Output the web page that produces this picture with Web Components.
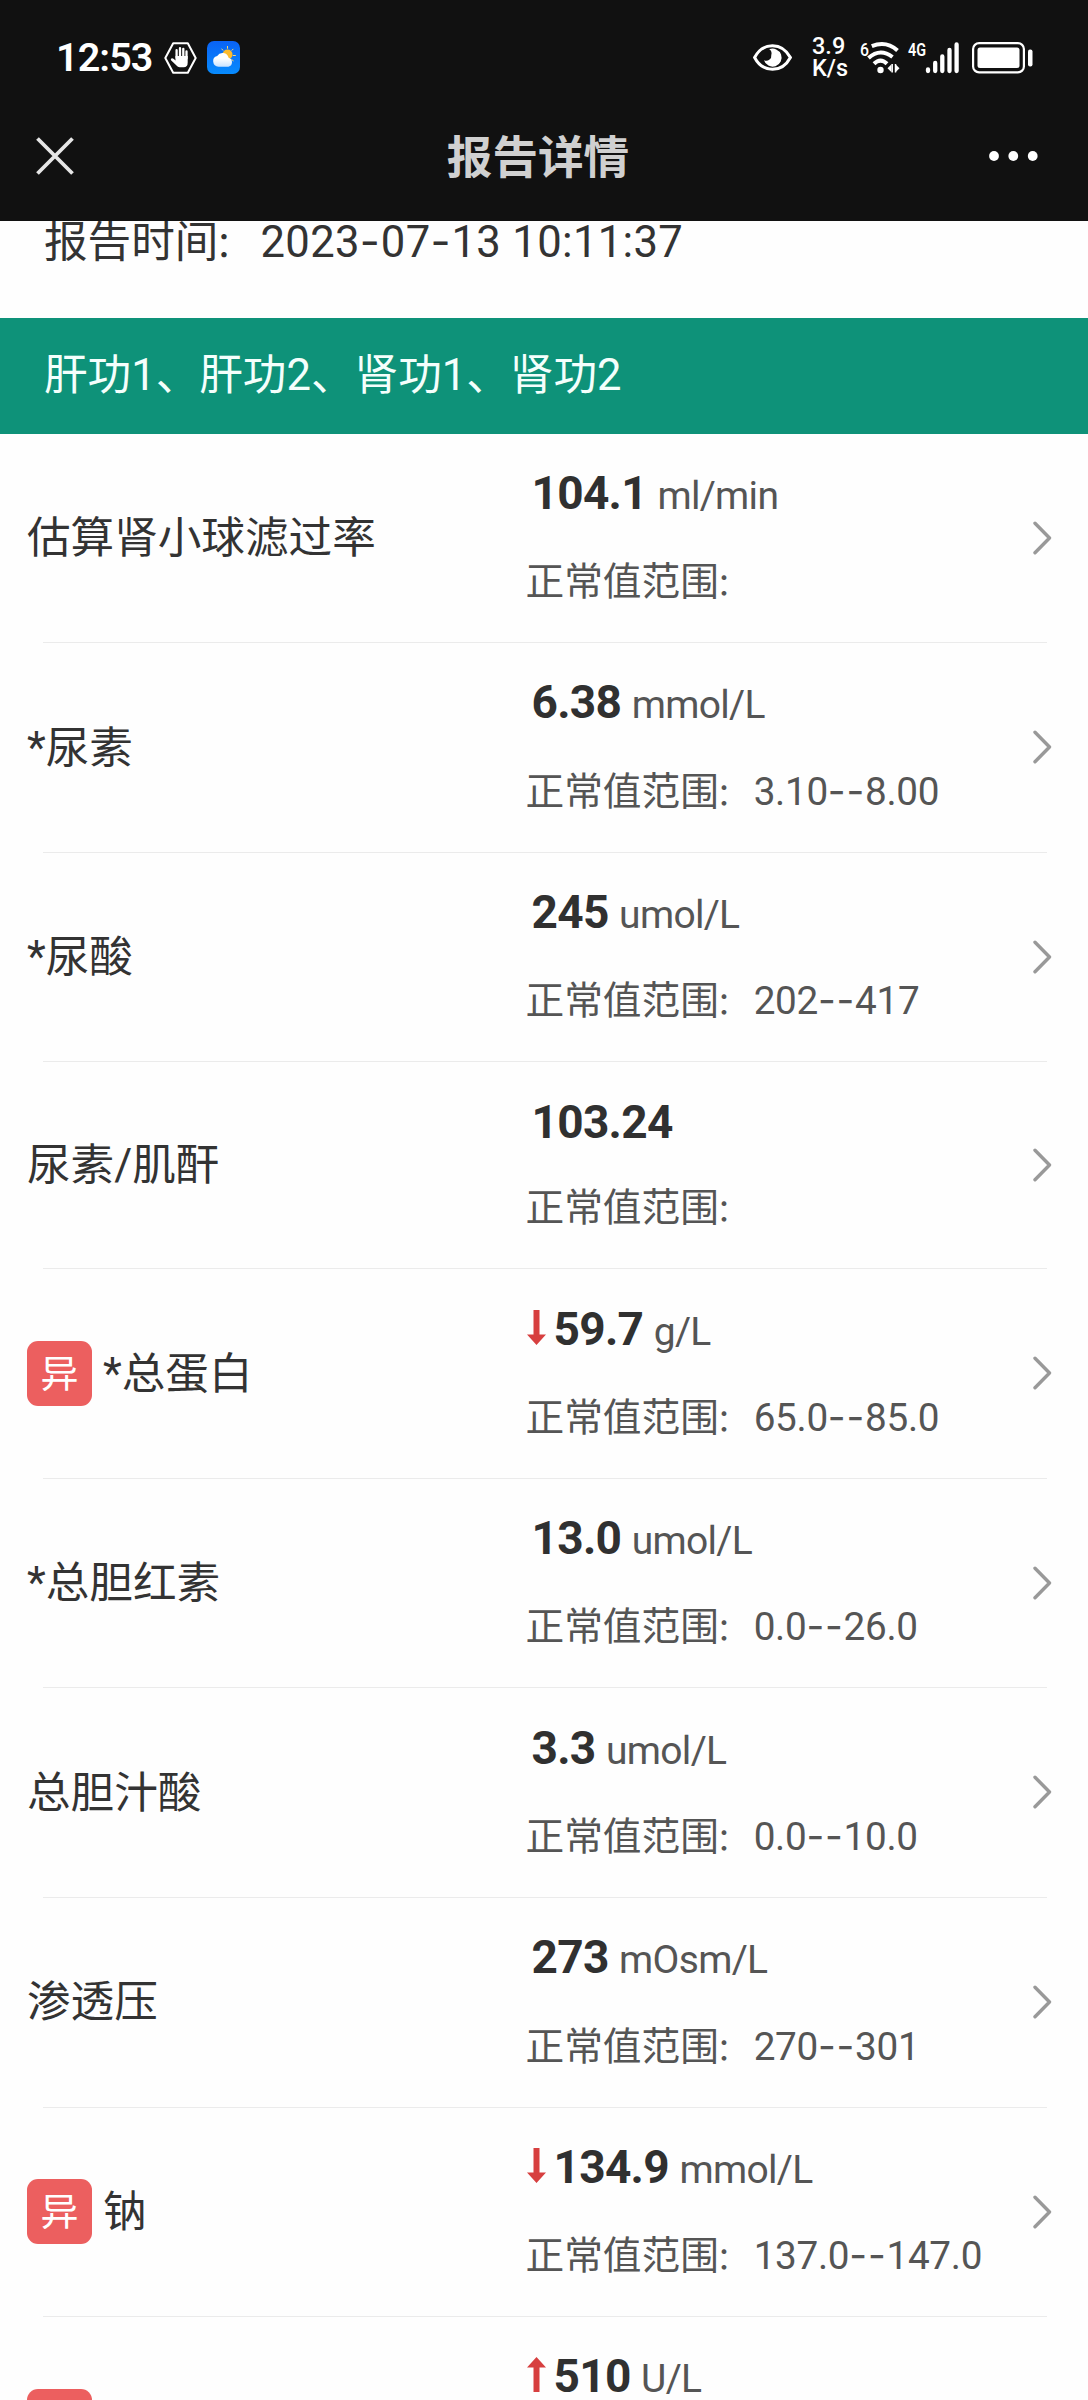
<!DOCTYPE html>
<html lang="zh-CN">
<head>
<meta charset="utf-8">
<title>报告详情</title>
<style>
html, body {
    margin: 0;
    height: 2400px;
    overflow: hidden;
}

body {
    background: #fefefe;
    color: #333;
    font-family: Roboto, "Noto Sans CJK SC", sans-serif;
}
</style>
</head>
<body>
<report-page></report-page>

<script>
// wraps hyphens so that they can be drawn wider than Roboto's own
const dashes = text => text.replace(/-+/g, m => `<span class="dash">${m}</span>`);

const textStyle = `
.dash {
    font-family: Inter, sans-serif;
    line-height: 0;
    letter-spacing: 0.02em;
}

.colon {
    font-size: 0.8em;
    line-height: 0;
    margin: 0 0.21em 0 -0.09em;
}`;

class StatusBar extends HTMLElement{
    constructor(){
        super();
        this.shadowDOM=this.attachShadow({mode:"open"});
    }

    connectedCallback(){
        this.shadowDOM.innerHTML=`
        <style>
        :host {
            display: flex;
            align-items: center;
            box-sizing: border-box;
            height: 115px;
            padding: 0 55px 0 56px;
            color: #fff;
        }

        svg {
            display: block;
            flex: none;
            overflow: visible;
        }

        .time {
            font-size: 39.5px;
            font-weight: 600;
            line-height: 60px;
            width: 108px;
            letter-spacing: -0.9px;
            margin-top: 1px;
        }

        .weather {
            margin-left: 10px;
        }

        .right {
            display: flex;
            align-items: center;
            margin-left: auto;
        }

        .speed {
            display: grid;
            font-size: 23.5px;
            line-height: 21.5px;
            font-weight: 500;
            width: 35px;
            margin: 0 13px 0 20px;
        }
        </style>
        <span class="time">12:53</span>
        <svg width="33" height="32" viewBox="0 0 33 32">
            <path d="M9.2 1.2h14.6l7.9 14.8-7.9 14.8H9.2L1.3 16z" fill="none" stroke="#fff" stroke-width="2" stroke-linejoin="round"/>
            <path d="M12.6 16V8.2M16 15V6.2M19.3 15V6.8M22.5 16.500V9.500" stroke="#fff" stroke-width="2.300" stroke-linecap="round"/>
            <path d="M11.500 14h12.200v6.500q0 4.700-4 4.700h-4q-2 0-3.200-1.600L7 18.200q-.8-1.600.9-1.900 1.200 0 2.200 1l1.400 1.300z" fill="#fff"/>
        </svg>
        <svg class="weather" width="33" height="33" viewBox="0 0 33 33">
            <defs>
                <linearGradient id="sky" x1="0" y1="0" x2="0" y2="1">
                    <stop offset="0" stop-color="#0a63f6"/><stop offset="1" stop-color="#078bfd"/>
                </linearGradient>
                <linearGradient id="cloud" x1="0" y1="0" x2="0" y2="1">
                    <stop offset="0.400" stop-color="#fff"/><stop offset="1" stop-color="#c9e3ff"/>
                </linearGradient>
            </defs>
            <rect width="33" height="33" rx="7" fill="url(#sky)"/>
            <circle cx="20.500" cy="13.500" r="5" fill="#fdbb2d"/>
            <path d="M20.500 5v2.700M14.600 7.700l1.500 1.800M26.300 7.900l-1.600 1.700M25.800 14.500h3M24.600 18.500l2 1.500" stroke="#ffd76a" stroke-width="1"/>
            <path d="M11.500 25.700a5.500 5.500 0 0 1-1.300-10.800 6.300 6.300 0 0 1 11.400 1.900 4.600 4.600 0 0 1-.1 8.900z" fill="url(#cloud)"/>
        </svg>
        <div class="right">
            <svg width="39" height="27" viewBox="0 0 39 27">
                <path d="M1.600 13.500C10-2.300 29-2.300 37.400 13.500 29 29.300 10 29.300 1.600 13.500z" fill="none" stroke="#fff" stroke-width="3"/>
                <path d="M16.200 5.300A9 9 0 1 1 11 16.200a5 5 0 0 0 7.300-5.200 5 5 0 0 0-2.100-5.700z" fill="#fff"/>
            </svg>
            <div class="speed"><span>3.9</span><span>K/s</span></div>
            <svg width="42" height="34" viewBox="0 0 42 34">
                <text x="0" y="14.500" font-size="19" font-weight="500" fill="#fff" textLength="9" lengthAdjust="spacingAndGlyphs">6</text>
                <g fill="none" stroke="#fff" stroke-width="4">
                    <path d="M11.800 5.200Q26 -.8 37.500 9.500"/>
                    <path d="M8.500 17Q20 6.500 32.500 16"/>
                    <path d="M14 22.800Q20.500 16.500 27 22.800"/>
                </g>
                <circle cx="20.500" cy="29" r="3.200" fill="#fff"/>
                <path d="M27.500 27.200l4-4v8zM35.500 23.200l4 4-4 4z" fill="#fff"/>
                <path d="M32.200 23v8.500M35.500 23v8.500" stroke="#fff" stroke-width="1.500"/>
            </svg>
            <svg style="margin-left:6px" width="53" height="34" viewBox="0 0 53 34">
                <text x="0" y="15" font-size="19" font-weight="600" fill="#fff" textLength="18" lengthAdjust="spacingAndGlyphs">4G</text>
                <path d="M20 28.500v1.500M27.200 22v8M34.300 15.500v14.500M41.500 9v21M48.600 3.500v26.500" stroke="#fff" stroke-width="4.300" stroke-linecap="round"/>
            </svg>
            <svg style="margin-left:11px" width="61" height="32" viewBox="0 0 61 32">
                <rect x="1.100" y="1.100" width="50.800" height="29.300" rx="6" fill="none" stroke="#fff" stroke-width="2.200"/>
                <rect x="5.500" y="5.500" width="42" height="20.500" rx="2.500" fill="#fff"/>
                <rect x="56" y="7.500" width="4.500" height="17" rx="2" fill="#fff"/>
            </svg>
        </div>`;
    }
}

customElements.define("status-bar", StatusBar);

class NavBar extends HTMLElement{
    constructor(){
        super();
        this.shadowDOM=this.attachShadow({mode:"open"});
    }

    connectedCallback(){
        this.shadowDOM.innerHTML=`
        <style>
        :host {
            display: grid;
            grid-template-columns: 1fr auto 1fr;
            align-items: center;
            box-sizing: border-box;
            height: 106px;
            padding: 0 50px 24px 36px;
        }

        .title {
            color: #d0d0d0;
            font-size: 45.6px;
            font-weight: 700;
            line-height: 60px;
            padding: 6px 0 0 2px;
        }

        .more {
            justify-self: end;
        }

        svg {
            display: block;
        }
        </style>
        <svg width="38" height="38" viewBox="0 0 38 38">
            <path d="M1.500 1.500l35 35M36.500 1.500l-35 35" stroke="#e6e6e6" stroke-width="3.800"/>
        </svg>
        <span class="title"><slot></slot></span>
        <svg class="more" width="49" height="10" viewBox="0 0 49 10" fill="#fff">
            <circle cx="5" cy="5" r="4.900"/><circle cx="24.300" cy="5" r="4.900"/><circle cx="43.700" cy="5" r="4.900"/>
        </svg>`;
    }
}

customElements.define("nav-bar", NavBar);

class ReportTime extends HTMLElement{
    constructor(){
        super();
        this.shadowDOM=this.attachShadow({mode:"open"});
    }

    connectedCallback(){
        this.shadowDOM.innerHTML=`
        <style>
        :host {
            display: block;
            box-sizing: border-box;
            height: 97px;
            padding-left: 44px;
            overflow: hidden;
            font-size: 43.6px;
            line-height: 43px;
            white-space: nowrap;
        }

        .time {
            margin-left: 3px;
            letter-spacing: 0.35px;
        }
        ${textStyle}
        </style>
        <span>报告时间<span class="colon">：</span></span><span class="time">${dashes(this.getAttribute("time"))}</span>`;
    }
}

customElements.define("report-time", ReportTime);

class SectionTitle extends HTMLElement{
    constructor(){
        super();
        this.shadowDOM=this.attachShadow({mode:"open"});
    }

    connectedCallback(){
        this.shadowDOM.innerHTML=`
        <style>
        :host {
            display: block;
            box-sizing: border-box;
            height: 115.6px;
            padding-left: 44px;
            background: #0e9279;
            color: #f4fffc;
            font-size: 43.6px;
            line-height: 115.6px;
        }
        </style>
        <slot></slot>`;
    }
}

customElements.define("section-title", SectionTitle);

class ReportItem extends HTMLElement{
    constructor(){
        super();
        this.shadowDOM=this.attachShadow({mode:"open"});
    }

    set item(item){
        this._item=item;
        this.render();
    }

    renderArrow(){
        if(!this._item.trend) return "";
        const d=this._item.trend==="down"
            ? "M6.500 0h6v24.500h6.500L9.500 35 0 24.500h6.500z"
            : "M6.500 35h6V10.500h6.500L9.500 0 0 10.500h6.500z";
        return `<svg class="arrow" width="19" height="35" viewBox="0 0 19 35"><path d="${d}" fill="#d73f3f"/></svg>`;
    }

    render(){
        const {name, value, unit, range, trend}=this._item;
        this.shadowDOM.innerHTML=`
        <style>
        :host {
            display: block;
        }

        .row {
            display: grid;
            grid-template-columns: 498.5px 1fr auto;
            align-items: center;
            padding: 29.3px 36px 29.9px 27px;
        }

        .name {
            display: flex;
            align-items: center;
            gap: 11px;
            font-size: 43.6px;
            line-height: 60px;
        }

        .badge {
            width: 65px;
            height: 65px;
            border-radius: 11px;
            background: #ec5f5f;
            color: #fff;
            font-size: 38px;
            line-height: 66px;
            text-align: center;
        }

        .label {
            padding-top: 3px;
        }

        .value {
            display: flex;
            align-items: baseline;
            height: 60px;
            line-height: 60px;
            padding-left: 6px;
            margin-bottom: ${unit ? 29.4 : 26.7}px;
        }

        .value.trend {
            padding-left: 1px;
        }

        .arrow {
            align-self: center;
            margin: 0 8px 3px 0;
        }

        b {
            font-size: 46px;
            font-weight: 700;
            letter-spacing: -0.7px;
            color: #303030;
        }

        .unit {
            margin-left: 10.5px;
            font-size: 39px;
            letter-spacing: -0.7px;
            color: #555;
        }

        .range {
            height: 60px;
            line-height: 60px;
            font-size: 38.700px;
            color: #555;
            white-space: nowrap;
        }

        .num {
            letter-spacing: -0.3px;
        }

        .line {
            height: 1px;
            margin: 0 41px 0 43px;
            background: #ebebeb;
        }
        ${textStyle}
        </style>
        <div class="row">
            <div class="name">
                ${trend ? `<span class="badge">异</span>` : ""}
                <span class="label">${name}</span>
            </div>
            <div>
                <div class="value ${trend ? "trend" : ""}">
                    ${this.renderArrow()}<b>${value}</b>
                    ${unit ? `<span class="unit">${unit}</span>` : ""}
                </div>
                <div class="range">正常值范围<span class="colon">：</span><span class="num">${dashes(range)}</span></div>
            </div>
            <svg width="20" height="34" viewBox="0 0 20 34">
                <path d="M3 2.200L17.500 17 3 31.800" fill="none" stroke="#999" stroke-width="3.400" stroke-linecap="round" stroke-linejoin="round"/>
            </svg>
        </div>
        <div class="line"></div>`;
    }
}

customElements.define("report-item", ReportItem);

class ReportPage extends HTMLElement{
    constructor(){
        super();
        this.shadowDOM=this.attachShadow({mode:"open"});
        this._items=[
            {name:"估算肾小球滤过率", value:"104.1", unit:"ml/min", range:""},
            {name:"*尿素", value:"6.38", unit:"mmol/L", range:"3.10--8.00"},
            {name:"*尿酸", value:"245", unit:"umol/L", range:"202--417"},
            {name:"尿素/肌酐", value:"103.24", unit:"", range:""},
            {name:"*总蛋白", value:"59.7", unit:"g/L", range:"65.0--85.0", trend:"down"},
            {name:"*总胆红素", value:"13.0", unit:"umol/L", range:"0.0--26.0"},
            {name:"总胆汁酸", value:"3.3", unit:"umol/L", range:"0.0--10.0"},
            {name:"渗透压", value:"273", unit:"mOsm/L", range:"270--301"},
            {name:"钠", value:"134.9", unit:"mmol/L", range:"137.0--147.0", trend:"down"},
            {name:"", value:"510", unit:"U/L", range:"", trend:"up"}
        ];
    }

    connectedCallback(){
        this.shadowDOM.innerHTML=`
        <style>
        :host {
            display: block;
            height: 2400px;
            overflow: hidden;
        }

        header {
            background: #111;
        }
        </style>
        <header>
            <status-bar></status-bar>
            <nav-bar>报告详情</nav-bar>
        </header>
        <report-time time="2023-07-13 10:11:37"></report-time>
        <section-title>肝功1、肝功2、肾功1、肾功2</section-title>
        <main></main>`;

        const main=this.shadowDOM.querySelector("main");
        this._items.forEach(item => {
            const reportItem=document.createElement("report-item");
            reportItem.item=item;
            main.appendChild(reportItem);
        });
    }
}

customElements.define("report-page", ReportPage);
</script>
</body>
</html>
